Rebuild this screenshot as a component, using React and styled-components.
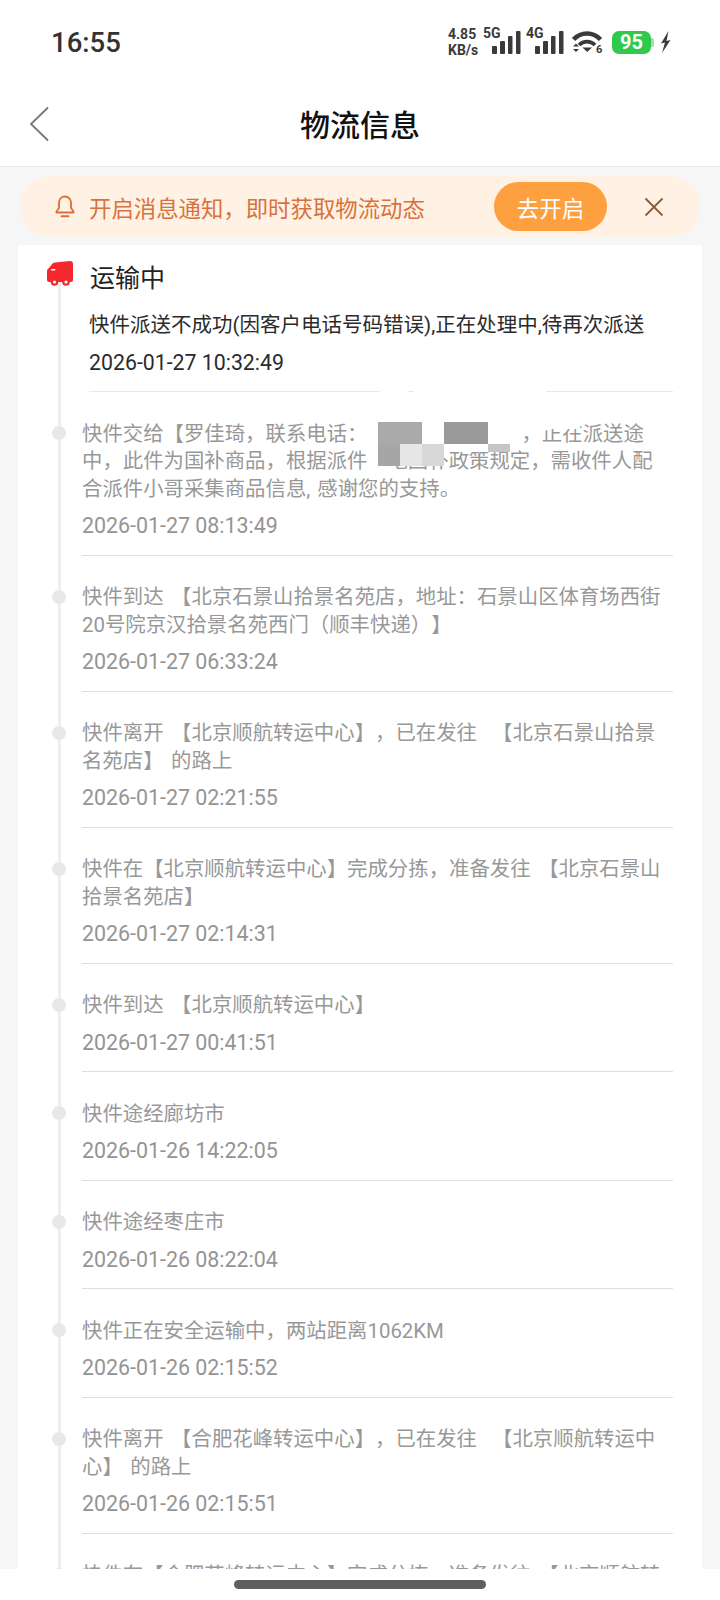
import React from 'react';
import styled, { createGlobalStyle } from 'styled-components';

const GlobalStyle = createGlobalStyle`
  html, body {
    margin: 0;
    padding: 0;
    background: #f6f6f6;
  }
  * {
    box-sizing: border-box;
  }
`;

const CJK = `Roboto, "Noto Sans CJK SC", sans-serif`;

const Page = styled.div`
  position: relative;
  width: 720px;
  height: 1600px;
  overflow: hidden;
  display: flex;
  flex-direction: column;
  background: #f6f6f6;
  font-family: ${CJK};
  text-spacing-trim: space-all;
`;

const TopArea = styled.header`
  height: 167px;
  flex: none;
  background: #fff;
  border-bottom: 1px solid #e8e8e8;
  display: flex;
  flex-direction: column;
`;

const StatusBar = styled.div`
  height: 84px;
  padding: 0 49px 0 51px;
  display: flex;
  justify-content: space-between;
  align-items: center;
`;

const Clock = styled.span`
  font-family: Roboto, sans-serif;
  font-size: 27.5px;
  font-weight: 500;
  color: #333;
`;

const StatusIcons = styled.div`
  display: flex;
  align-items: center;
  color: #3a3a3a;
`;

const Speed = styled.span`
  font-family: Roboto, sans-serif;
  font-size: 14px;
  font-weight: 700;
  line-height: 16px;
  width: 35px;
`;

const NetLabel = styled.span`
  font-family: Roboto, sans-serif;
  font-size: 14px;
  font-weight: 700;
  align-self: flex-start;
  line-height: 15px;
  width: 18px;
  margin-right: -9px;
`;

const SignalGroup = styled.div`
  display: flex;
  align-items: flex-start;
  height: 32px;
  margin-right: ${(p) => p.$gap}px;
`;

const SignalIcon = styled.svg`
  margin-top: 5px;
  fill: currentColor;
`;

const Battery = styled.span`
  position: relative;
  width: 39px;
  height: 23px;
  margin: 0 9px 0 9px;
  border-radius: 7px;
  background: #2fc94b;
  color: #fff;
  font-family: Roboto, sans-serif;
  font-size: 20px;
  font-weight: 700;
  display: flex;
  align-items: center;
  justify-content: center;

  &::after {
    content: '';
    position: absolute;
    right: -3px;
    top: 7px;
    width: 3px;
    height: 9px;
    border-radius: 0 2px 2px 0;
    background: #a4dcae;
  }
`;

const NavBar = styled.div`
  flex: 1;
  position: relative;
  display: flex;
  align-items: center;
  justify-content: center;
`;

const BackButton = styled.button`
  position: absolute;
  left: 28px;
  top: 22px;
  padding: 0;
  background: none;
  border: 0;
  display: flex;
`;

const Title = styled.h1`
  margin: 0 0 4px;
  font-size: 30px;
  font-weight: 500;
  color: #111;
`;

const Main = styled.main`
  flex: 1;
  min-height: 0;
  overflow: hidden;
  padding: 9px 18px 0;
`;

const Notice = styled.div`
  height: 61px;
  margin: 0 2px 8px;
  padding: 0 36px 0 35px;
  border-radius: 30px;
  background: #fff2e4;
  display: flex;
  align-items: center;
`;

const NoticeText = styled.span`
  margin-left: 14px;
  font-size: 22.4px;
  color: #d9713c;
  white-space: nowrap;
`;

const OpenButton = styled.button`
  width: 113px;
  height: 49px;
  margin-left: auto;
  border: 0;
  border-radius: 25px;
  background: #ffa040;
  color: #fff;
  font-family: ${CJK};
  font-size: 22.5px;
`;

const CloseButton = styled.button`
  margin-left: 37px;
  padding: 0;
  background: none;
  border: 0;
  display: flex;
`;

const Card = styled.section`
  position: relative;
  background: #fff;
  padding: 0 29px 0 64px;
`;

const Rail = styled.div`
  position: absolute;
  left: 40px;
  top: 32px;
  bottom: 0;
  width: 3px;
  background: #eeeeee;
`;

const TruckBadge = styled.div`
  position: absolute;
  left: 28px;
  top: 14px;
  display: flex;
`;

const Current = styled.div`
  height: 147px;
  margin-left: 7px;
  padding-top: 14px;
  border-bottom: 1px solid #e8e8e8;
`;

const CurrentTitle = styled.div`
  padding-left: 1px;
  font-size: 25px;
  line-height: 40px;
  color: #222;
`;

const CurrentText = styled.div`
  margin-top: 7px;
  font-size: 20.5px;
  line-height: 38px;
  color: #2b2b2b;
  white-space: nowrap;
`;

const CurrentTime = styled.div`
  font-size: 21.3px;
  line-height: 38px;
  color: #2b2b2b;
`;

const Item = styled.div`
  position: relative;
  padding: 28.5px 0 14.5px;
  border-bottom: 1px solid #dedede;
`;

const Dot = styled.span`
  position: absolute;
  left: -30px;
  top: 34px;
  width: 14px;
  height: 14px;
  border-radius: 50%;
  background: #e8e8e8;
`;

const Line = styled.div`
  font-size: 20.4px;
  line-height: 27.5px;
  word-spacing: 2.5px;
  color: #989898;
  white-space: pre;
`;

const Blank = styled.span`
  display: inline-block;
  width: ${(p) => p.$w}px;
`;

const Time = styled.div`
  margin-top: 9px;
  font-size: 21.4px;
  line-height: 28px;
  color: #949494;
`;

const Mosaic = styled.div`
  position: absolute;
  left: 360px;
  top: 177px;
  display: grid;
  grid-template-columns: repeat(6, 22px);
  grid-template-rows: 22px 8px 14px;
`;

const Cell = styled.span`
  background: ${(p) => p.$c};
`;

const Smudge = styled.div`
  position: absolute;
  left: ${(p) => p.$left}px;
  top: ${(p) => p.$top}px;
  width: ${(p) => p.$w}px;
  height: ${(p) => p.$h}px;
  background: #fff;
`;

const HomeArea = styled.footer`
  position: absolute;
  left: 0;
  right: 0;
  bottom: 0;
  height: 31px;
  background: #fff;
  display: flex;
  justify-content: center;
  padding-top: 11px;
`;

const HomeBar = styled.div`
  width: 252px;
  height: 9px;
  border-radius: 5px;
  background: #5f5f5f;
`;

const records = [
  {
    lines: [
      <>快件交给【罗佳琦，联系电话：<Blank $w={154} />，正在派送途</>,
      <>中，此件为国补商品，根据派件<Blank $w={20} />地国补政策规定，需收件人配</>,
      <>合派件小哥采集商品信息,<Blank $w={7} />感谢您的支持。</>,
    ],
    time: '2026-01-27 08:13:49',
  },
  {
    lines: ['快件到达 【北京石景山拾景名苑店，地址：石景山区体育场西街', '20号院京汉拾景名苑西门（顺丰快递）】'],
    time: '2026-01-27 06:33:24',
  },
  {
    lines: ['快件离开 【北京顺航转运中心】，已在发往  【北京石景山拾景', '名苑店】 的路上'],
    time: '2026-01-27 02:21:55',
  },
  {
    lines: ['快件在【北京顺航转运中心】完成分拣，准备发往 【北京石景山', '拾景名苑店】'],
    time: '2026-01-27 02:14:31',
  },
  { lines: ['快件到达 【北京顺航转运中心】'], time: '2026-01-27 00:41:51' },
  { lines: ['快件途经廊坊市'], time: '2026-01-26 14:22:05' },
  { lines: ['快件途经枣庄市'], time: '2026-01-26 08:22:04' },
  { lines: ['快件正在安全运输中，两站距离1062KM'], time: '2026-01-26 02:15:52' },
  {
    lines: ['快件离开 【合肥花峰转运中心】，已在发往  【北京顺航转运中', '心】 的路上'],
    time: '2026-01-26 02:15:51',
  },
  {
    lines: ['快件在【合肥花峰转运中心】完成分拣，准备发往 【北京顺航转', '运中心】'],
    time: '2026-01-26 02:15:00',
  },
];

const mosaicCells = [
  '#aaaaaa', '#aaaaaa', '#ffffff', '#9a9a9a', '#9a9a9a', 'transparent',
  '#a6a6a6', '#e6e6e6', '#d8d8d8', '#ffffff', '#ffffff', '#c6c6c6',
  '#a6a6a6', '#e6e6e6', '#d8d8d8', 'transparent', 'transparent', 'transparent',
];

function Signal() {
  return (
    <SignalIcon width="29" height="24" viewBox="0 0 29 24">
      <rect x="0" y="15" width="5" height="8" rx="1" />
      <rect x="8" y="10" width="5" height="13" rx="1" />
      <rect x="16" y="5" width="4.5" height="18" rx="1" />
      <rect x="24" y="0" width="4.5" height="23" rx="1" />
    </SignalIcon>
  );
}

function Wifi() {
  return (
    <svg width="31" height="24" viewBox="0 0 31 24" fill="none" stroke="currentColor">
      <path d="M1.500 9.500C9 1.500 21 1.500 28.500 9.500" strokeWidth="4.500" />
      <path d="M7 15C11.500 10.500 18.500 10.500 23 15" strokeWidth="3.800" />
      <path d="M10.500 17.500h9.500l-4.750 4.500z" fill="currentColor" stroke="none" />
      <path d="M1 16.500l3-3 3 3zM1 19l3 3 3-3z" fill="currentColor" stroke="none" />
      <text x="24" y="22.500" fontSize="11" fontWeight="700" fontFamily="Roboto" fill="currentColor" stroke="none">6</text>
    </svg>
  );
}

function Bolt() {
  return (
    <svg width="11" height="22" viewBox="0 0 11 22" fill="currentColor">
      <path d="M8.500 0 1 12.500l4-1L2 22l8.500-13-4 1z" />
    </svg>
  );
}

function Bell() {
  return (
    <svg width="20" height="23" viewBox="0 0 20 23" fill="none" stroke="#d9713c" strokeWidth="1.900" strokeLinecap="round" strokeLinejoin="round">
      <path d="M10 1.500c-3.500 0-6 2.800-6 6.500v5l-2.500 3.500v1h17v-1L16 13V8c0-3.700-2.500-6.500-6-6.500z" />
      <path d="M6.500 21.200h7" />
    </svg>
  );
}

function Truck() {
  return (
    <svg width="28" height="27" viewBox="0 0 28 27" fill="#f5282f">
      <path d="M9 3.500 24 2a3 3 0 0 1 3 3v16a2 2 0 0 1-2 2H3a2 2 0 0 1-2-2v-9q0-2 2-3l3-4q1-1.500 3-1.500z" />
      <circle cx="8.500" cy="23" r="3.800" />
      <circle cx="20" cy="23" r="3.800" />
      <circle cx="8.500" cy="23" r="1.600" fill="#fff" />
      <circle cx="20" cy="23" r="1.600" fill="#fff" />
      <rect x="5" y="10" width="4.500" height="1.500" rx="0.700" fill="#fff" />
    </svg>
  );
}

function App() {
  return (
    <Page>
      <GlobalStyle />
      <TopArea>
        <StatusBar>
          <Clock>16:55</Clock>
          <StatusIcons>
            <Speed>4.85<br />KB/s</Speed>
            <SignalGroup $gap={5}>
              <NetLabel>5G</NetLabel>
              <Signal />
            </SignalGroup>
            <SignalGroup $gap={8}>
              <NetLabel>4G</NetLabel>
              <Signal />
            </SignalGroup>
            <Wifi />
            <Battery>95</Battery>
            <Bolt />
          </StatusIcons>
        </StatusBar>
        <NavBar>
          <BackButton aria-label="返回">
            <svg width="22" height="36" viewBox="0 0 22 36" fill="none" stroke="#777" strokeWidth="1.800">
              <path d="M20 1.500 3 18l17 16.500" />
            </svg>
          </BackButton>
          <Title>物流信息</Title>
        </NavBar>
      </TopArea>
      <Main>
        <Notice>
          <Bell />
          <NoticeText>开启消息通知，即时获取物流动态</NoticeText>
          <OpenButton>去开启</OpenButton>
          <CloseButton aria-label="关闭">
            <svg width="20" height="20" viewBox="0 0 20 20" fill="none" stroke="#8a5a3a" strokeWidth="1.800">
              <path d="M1.500 1.500l17 17M18.500 1.500l-17 17" />
            </svg>
          </CloseButton>
        </Notice>
        <Card>
          <Rail />
          <TruckBadge><Truck /></TruckBadge>
          <Current>
            <CurrentTitle>运输中</CurrentTitle>
            <CurrentText>快件派送不成功(因客户电话号码错误),正在处理中,待再次派送</CurrentText>
            <CurrentTime>2026-01-27 10:32:49</CurrentTime>
          </Current>
          {records.map((r) => (
            <Item key={r.time}>
              <Dot />
              {r.lines.map((l, i) => <Line key={i}>{l}</Line>)}
              <Time>{r.time}</Time>
            </Item>
          ))}
          <Smudge $left={362} $top={140} $w={28} $h={8} />
          <Smudge $left={396} $top={140} $w={132} $h={8} />
          <Smudge $left={522} $top={177} $w={40} $h={7} />
          <Mosaic>
            {mosaicCells.map((c, i) => <Cell key={i} $c={c} />)}
          </Mosaic>
        </Card>
      </Main>
      <HomeArea><HomeBar /></HomeArea>
    </Page>
  );
}

export default App;
